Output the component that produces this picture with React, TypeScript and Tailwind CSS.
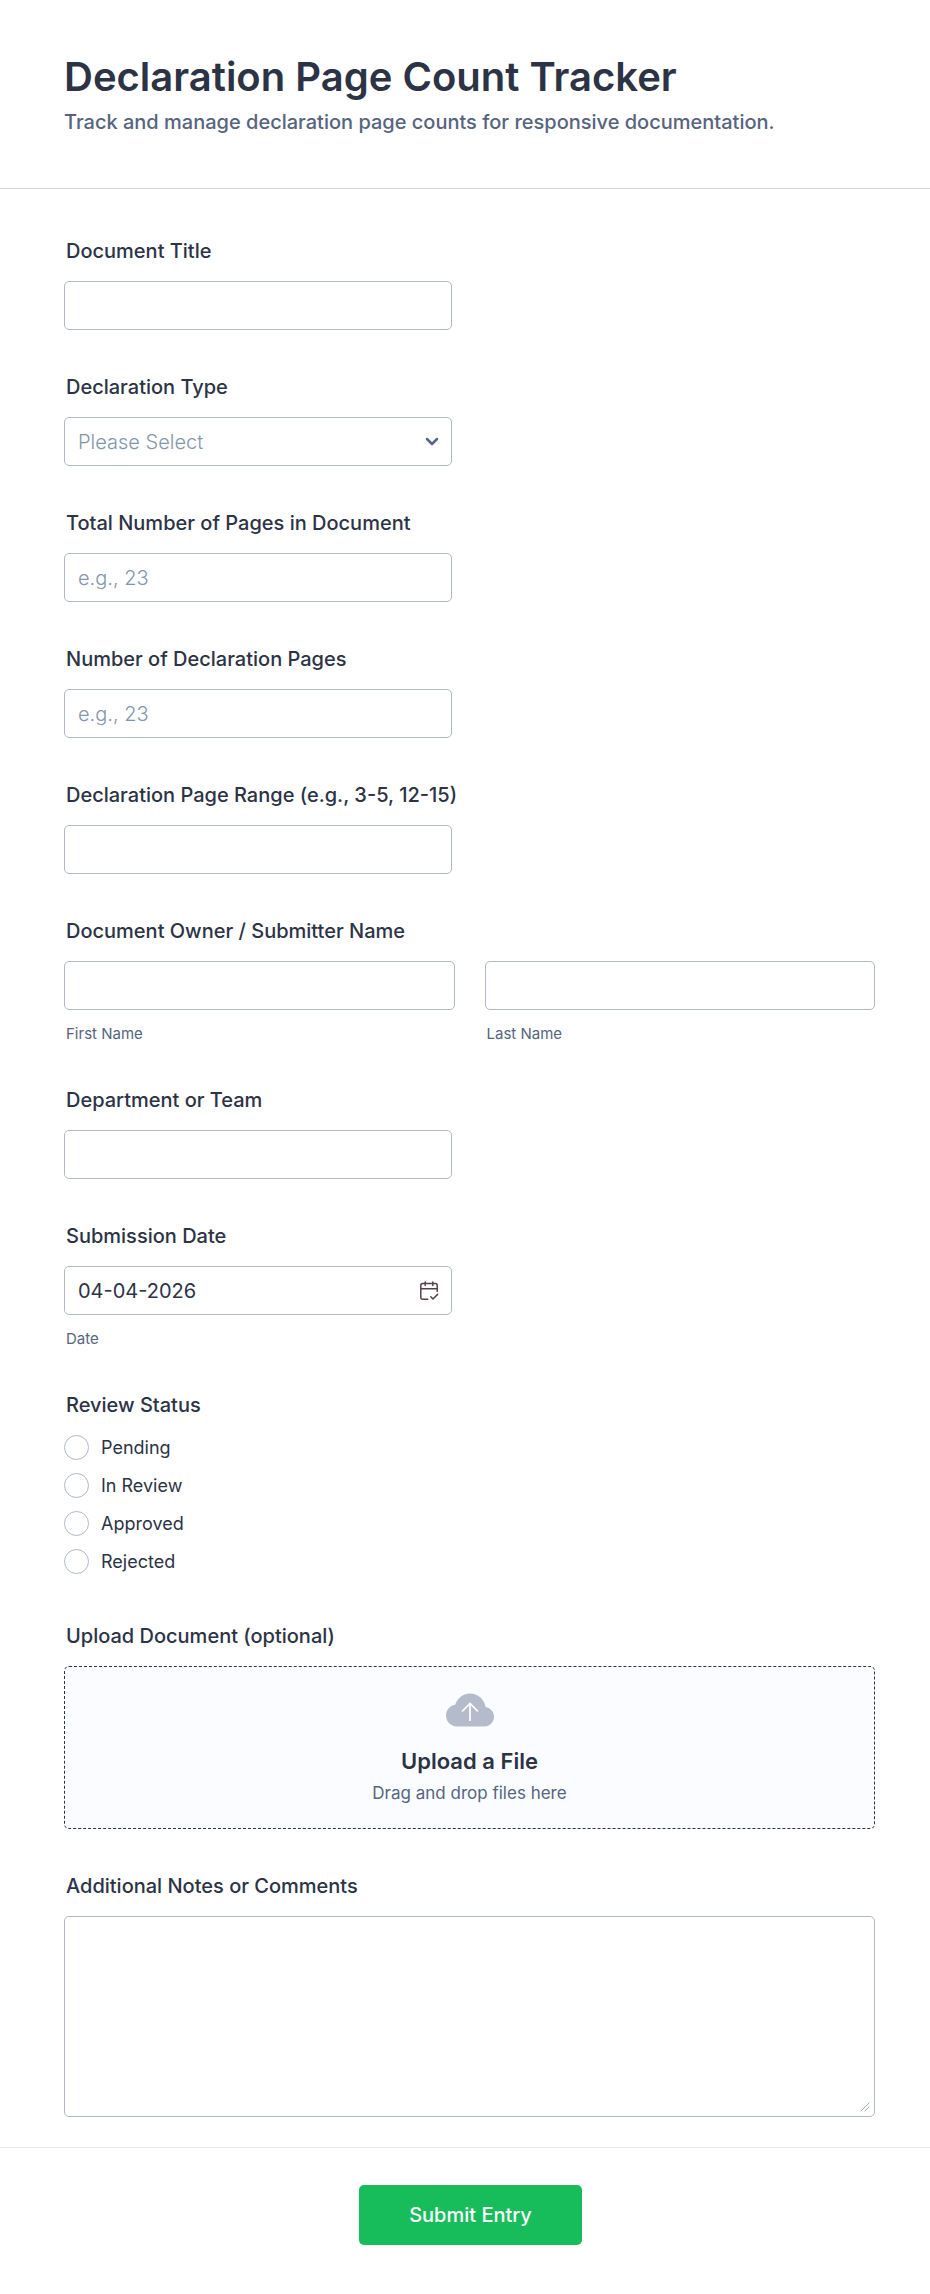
import { useState } from "react";
import type { ReactNode } from "react";

const inputClass =
  "block h-[49px] w-full rounded-[5px] border border-[#b1b8c8] bg-white px-[13px] text-[20px] text-[#2c3345] outline-none placeholder:font-light placeholder:text-[#8496ab] placeholder:opacity-100 focus:border-[#4277ff]";

const labelClass = "mb-[18px] block pl-0.5 text-[20px] leading-6 font-medium text-[#2c3345]";

const subLabelClass = "mt-3.5 block pl-0.5 text-[15px] leading-[19px] text-[#57647e]";

const statuses = ["Pending", "In Review", "Approved", "Rejected"];

const declarationTypes = ["Original", "Amended", "Supplemental", "Other"];

function Field({ id, label, children }: { id: string; label: string; children: ReactNode }) {
  return (
    <div>
      <label htmlFor={id} className={labelClass}>
        {label}
      </label>
      <div className="relative max-w-[388px]">{children}</div>
    </div>
  );
}

function CalendarIcon() {
  return (
    <svg
      viewBox="0 0 20 20"
      className="size-5"
      fill="none"
      stroke="#57404f"
      strokeWidth="1.5"
      strokeLinecap="round"
      strokeLinejoin="round"
    >
      <path d="M8.8 18.2H3.6a1.8 1.8 0 0 1-1.8-1.8V4.4a1.8 1.8 0 0 1 1.8-1.8h12.8a1.8 1.8 0 0 1 1.8 1.8v6" />
      <path d="M1.8 7.8h16.4M6.2 1v3.6M13.8 1v3.6" />
      <path d="m11.8 15.8 2.2 2.2 4.6-4.6" />
    </svg>
  );
}

function CloudIcon() {
  return (
    <svg viewBox="0 0 48 34" className="h-[34px] w-12" fill="none">
      <path
        d="M24 .5c7.8 0 14.2 5.4 15.6 13.4C44.5 14.8 48 18.8 48 23.8c0 5.3-4.2 9.7-9.4 9.700H11C4.900 33.500 0 28.700 0 22.600 0 17 3.900 12.500 9.200 11.700 11.600 5 17.300.5 24 .5Z"
        fill="#b4bccb"
      />
      <path d="M24 28V11M16 18.500l8-8 8 8" stroke="#fff" strokeWidth="1.7" />
    </svg>
  );
}

export default function App() {
  const [status, setStatus] = useState("");

  return (
    <form
      className="bg-white font-['Inter',sans-serif] text-[#2c3345]"
      onSubmit={(e) => e.preventDefault()}
    >
      {/* Header */}
      <header className="border-b border-[#d3d8e0] pt-[52px] pr-[55px] pb-[54px] pl-16">
        <h1 className="text-[40px] leading-[50px] font-semibold">Declaration Page Count Tracker</h1>
        <p className="mt-2 text-[20px] leading-6 font-medium text-[#57647e]">
          Track and manage declaration page counts for responsive documentation.
        </p>
      </header>

      {/* Fields */}
      <div className="flex flex-col gap-[45px] pt-[50px] pr-[55px] pb-[30px] pl-16">
        <Field id="title" label="Document Title">
          <input id="title" type="text" className={inputClass} />
        </Field>

        <Field id="type" label="Declaration Type">
          <select
            id="type"
            defaultValue=""
            className={`${inputClass} appearance-none font-light text-[#8496ab]!`}
          >
            <option value="">Please Select</option>
            {declarationTypes.map((type) => (
              <option key={type}>{type}</option>
            ))}
          </select>
          <svg
            viewBox="0 0 14 10"
            className="pointer-events-none absolute top-5 right-[13px] h-2.5 w-3.5"
            fill="none"
            stroke="#57648e"
            strokeWidth="2.5"
            strokeLinecap="round"
            strokeLinejoin="round"
          >
            <path d="m2 2 5 5 5-5" />
          </svg>
        </Field>

        <Field id="total" label="Total Number of Pages in Document">
          <input id="total" type="text" inputMode="numeric" placeholder="e.g., 23" className={inputClass} />
        </Field>

        <Field id="count" label="Number of Declaration Pages">
          <input id="count" type="text" inputMode="numeric" placeholder="e.g., 23" className={inputClass} />
        </Field>

        <Field id="range" label="Declaration Page Range (e.g., 3-5, 12-15)">
          <input id="range" type="text" className={inputClass} />
        </Field>

        <fieldset>
          <legend className={labelClass}>Document Owner / Submitter Name</legend>
          <div className="grid grid-cols-2 gap-[30px]">
            <div>
              <input id="first" type="text" className={inputClass} />
              <label htmlFor="first" className={subLabelClass}>
                First Name
              </label>
            </div>
            <div>
              <input id="last" type="text" className={inputClass} />
              <label htmlFor="last" className={subLabelClass}>
                Last Name
              </label>
            </div>
          </div>
        </fieldset>

        <Field id="team" label="Department or Team">
          <input id="team" type="text" className={inputClass} />
        </Field>

        <Field id="date" label="Submission Date">
          <input id="date" type="text" defaultValue="04-04-2026" className={inputClass} />
          <button type="button" aria-label="Choose date" className="absolute top-[15px] right-[13px]">
            <CalendarIcon />
          </button>
          <label htmlFor="date" className={subLabelClass}>
            Date
          </label>
        </Field>

        <fieldset>
          <legend className={labelClass}>Review Status</legend>
          <div className="flex flex-col gap-[13px]">
            {statuses.map((item) => (
              <label key={item} className="flex items-center gap-3 text-[18px] leading-[25px]">
                <input
                  type="radio"
                  name="status"
                  value={item}
                  checked={status === item}
                  onChange={() => setStatus(item)}
                  className="size-[25px] shrink-0 appearance-none rounded-full border border-[#b1b8c8] bg-white checked:border-8 checked:border-[#2e69ff]"
                />
                {item}
              </label>
            ))}
          </div>
        </fieldset>

        <div className="pt-[5px]">
          <label htmlFor="file" className={labelClass}>
            Upload Document (optional)
          </label>
          <label
            htmlFor="file"
            className="flex h-[163px] cursor-pointer flex-col items-center rounded-[5px] border border-dashed border-[#2c3345] bg-[#fafcff] pt-[26px]"
          >
            <CloudIcon />
            <span className="mt-5 text-[22px] leading-7 font-semibold">Upload a File</span>
            <span className="mt-1.5 text-[17px] leading-6 text-[#57647e]">Drag and drop files here</span>
            <input id="file" type="file" className="sr-only" />
          </label>
        </div>

        <div>
          <label htmlFor="notes" className={labelClass}>
            Additional Notes or Comments
          </label>
          <div className="relative">
            <textarea
              id="notes"
              className="block h-[201px] w-full resize-y rounded-[5px] border border-[#b1b8c8] bg-white p-3 text-[20px] outline-none focus:border-[#4277ff] [&::-webkit-resizer]:hidden"
            />
            <svg
              viewBox="0 0 10 10"
              className="pointer-events-none absolute right-[5px] bottom-[5px] size-2.5"
              stroke="#a4abbb"
              strokeLinecap="round"
            >
              <path d="M1 9l8-8M5 9l4-4" />
            </svg>
          </div>
        </div>
      </div>

      {/* Submit */}
      <footer className="flex justify-center border-t border-[#e3e7ee] pt-[37px] pr-[53px] pb-12 pl-16">
        <button
          type="submit"
          className="h-[60px] min-w-[223px] rounded-[5px] bg-[#18bd5b] px-8 text-[20px] font-medium text-white"
        >
          Submit Entry
        </button>
      </footer>
    </form>
  );
}
